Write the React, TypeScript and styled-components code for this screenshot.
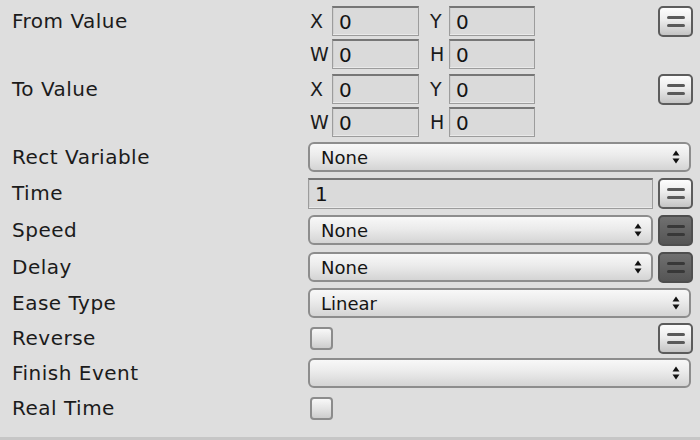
import React from "react";
import styled, { createGlobalStyle } from "styled-components";

const Global = createGlobalStyle`
  html, body { margin: 0; padding: 0; background: #dedede; }
  body { font-family: "DejaVu Sans", "Liberation Sans", sans-serif; }
`;

const Panel = styled.div`
  box-sizing: border-box;
  width: 700px;
  height: 440px;
  padding-top: 6px;
  background: #dedede;
  border-bottom: 3px solid #c6c6c6;
  display: flex;
  flex-direction: column;
  gap: 5px;
  overflow: hidden;
`;

const Row = styled.div<{ $h: number }>`
  display: grid;
  grid-template-columns: 308px 1fr;
  height: ${(p) => p.$h}px;
  padding-right: 7px;
`;

const Label = styled.div<{ $h?: number }>`
  padding-left: 12px;
  height: ${(p) => p.$h ?? 30}px;
  display: flex;
  align-items: center;
  font-size: 20px;
  letter-spacing: 0.5px;
  color: #1b1b1b;
  white-space: nowrap;
`;

const Control = styled.div<{ $align?: string }>`
  display: flex;
  align-items: ${(p) => p.$align ?? "center"};
  gap: 5px;
  min-width: 0;
`;

const VectorGrid = styled.div`
  flex: 1;
  display: flex;
  flex-direction: column;
  gap: 3px;
`;

const VectorLine = styled.div`
  display: flex;
  align-items: center;
  height: 30px;
`;

const Axis = styled.span<{ $first?: boolean }>`
  width: ${(p) => (p.$first ? 24 : 21)}px;
  padding-left: 2px;
  box-sizing: border-box;
  font-size: 19px;
  color: #1b1b1b;
`;

const Field = styled.div<{ $w?: number; $gapRight?: number }>`
  box-sizing: border-box;
  height: ${(p) => (p.$w ? 30 : 31)}px;
  ${(p) => (p.$w ? `width: ${p.$w}px;` : "flex: 1;")}
  margin-right: ${(p) => p.$gapRight ?? 0}px;
  background: #dadada;
  border: 1px solid #9c9c9c;
  border-top: 2px solid #767676;
  box-shadow: inset 0 -1px 0 #e9e9e9, inset 1px 0 0 #cfcfcf;
  display: flex;
  align-items: center;
  padding-left: 6px;
  font-size: 20px;
  color: #141414;
`;

const Dropdown = styled.div<{ $full?: boolean }>`
  box-sizing: border-box;
  flex: 1;
  height: 30px;
  margin-right: ${(p) => (p.$full ? 2 : 0)}px;
  border: 2px solid #8d8d8d;
  border-radius: 6px;
  background: linear-gradient(#f8f8f8, #ebebeb 45%, #d4d4d4);
  display: flex;
  align-items: center;
  justify-content: space-between;
  padding: 0 9px 0 11px;
  font-size: 18px;
  color: #141414;
`;

const EqButton = styled.div<{ $dark?: boolean }>`
  box-sizing: border-box;
  flex: none;
  width: 35px;
  height: 31px;
  border: 2px solid ${(p) => (p.$dark ? "#4e4e4e" : "#5c5c5c")};
  border-radius: 5px;
  background: ${(p) =>
    p.$dark
      ? "linear-gradient(#707070, #626262 50%, #555555)"
      : "linear-gradient(#fdfdfd, #ececec 45%, #c4c4c4)"};
  display: flex;
  flex-direction: column;
  align-items: center;
  justify-content: center;
  gap: 5px;
`;

const Bar = styled.span<{ $dark?: boolean }>`
  width: 18px;
  height: 3px;
  border-radius: 2px;
  background: ${(p) => (p.$dark ? "#383838" : "#5a5a5a")};
`;

const Check = styled.div`
  box-sizing: border-box;
  width: 23px;
  height: 23px;
  margin-left: 2px;
  border: 2px solid #8c8c8c;
  border-radius: 4px;
  background: linear-gradient(#f8f8f8, #e4e4e4 50%, #cdcdcd);
`;

const Spacer = styled.div`
  flex: 1;
`;

const Arrows = () => (
  <svg width="8" height="14" viewBox="0 0 8 14">
    <path d="M4 0.5 L7.5 5.5 L0.5 5.5 Z" fill="#111" />
    <path d="M4 13.5 L7.5 8.5 L0.5 8.5 Z" fill="#111" />
  </svg>
);

const Eq = ({ dark }: { dark?: boolean }) => (
  <EqButton $dark={dark}>
    <Bar $dark={dark} />
    <Bar $dark={dark} />
  </EqButton>
);

const Select = ({ value, full }: { value: string; full?: boolean }) => (
  <Dropdown $full={full}>
    <span>{value}</span>
    <Arrows />
  </Dropdown>
);

const RectRow = ({ label }: { label: string }) => (
  <Row $h={63}>
    <Label>{label}</Label>
    <Control $align="flex-start">
      <VectorGrid>
        <VectorLine>
          <Axis $first>X</Axis>
          <Field $w={87} $gapRight={9}>0</Field>
          <Axis>Y</Axis>
          <Field $w={86}>0</Field>
        </VectorLine>
        <VectorLine>
          <Axis $first>W</Axis>
          <Field $w={87} $gapRight={9}>0</Field>
          <Axis>H</Axis>
          <Field $w={86}>0</Field>
        </VectorLine>
      </VectorGrid>
      <Eq />
    </Control>
  </Row>
);

export default function App() {
  return (
    <>
      <Global />
      <Panel>
        <RectRow label="From Value" />
        <RectRow label="To Value" />
        <Row $h={30}>
          <Label>Rect Variable</Label>
          <Control>
            <Select value="None" full />
          </Control>
        </Row>
        <Row $h={32}>
          <Label $h={32}>Time</Label>
          <Control>
            <Field>1</Field>
            <Eq />
          </Control>
        </Row>
        <Row $h={32}>
          <Label $h={32}>Speed</Label>
          <Control>
            <Select value="None" />
            <Eq dark />
          </Control>
        </Row>
        <Row $h={32}>
          <Label $h={32}>Delay</Label>
          <Control>
            <Select value="None" />
            <Eq dark />
          </Control>
        </Row>
        <Row $h={30}>
          <Label>Ease Type</Label>
          <Control>
            <Select value="Linear" full />
          </Control>
        </Row>
        <Row $h={30}>
          <Label>Reverse</Label>
          <Control>
            <Check />
            <Spacer />
            <Eq />
          </Control>
        </Row>
        <Row $h={30}>
          <Label>Finish Event</Label>
          <Control>
            <Select value="" full />
          </Control>
        </Row>
        <Row $h={30}>
          <Label>Real Time</Label>
          <Control>
            <Check />
          </Control>
        </Row>
      </Panel>
    </>
  );
}
